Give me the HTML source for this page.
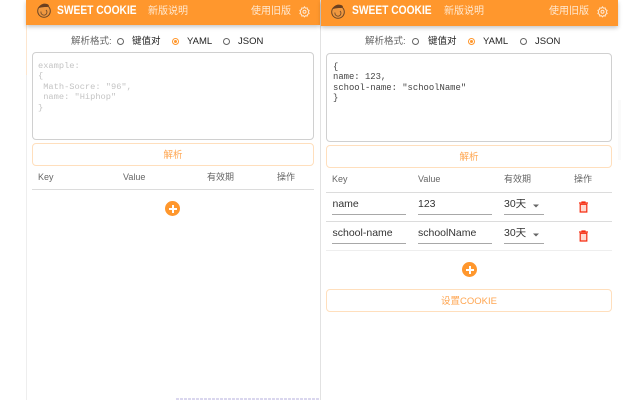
<!DOCTYPE html>
<html>
<head>
<meta charset="utf-8">
<style>
html,body{margin:0;padding:0;width:640px;height:400px;overflow:hidden;background:#fff}
body{font-family:"Liberation Sans","Noto Sans CJK SC",sans-serif;position:relative;color:#333}
#p{position:absolute;left:0;top:0;width:640px;height:400px;filter:blur(.3px)}
.a{position:absolute;white-space:nowrap}
.hd{position:absolute;background:#ff972d;box-shadow:0 2px 4px rgba(0,0,0,.22)}
.t{font-weight:bold;font-size:11.5px;color:#fff;line-height:14px;transform:scaleX(.89);transform-origin:0 0}
.w{font-size:10px;color:#ffe9d2;line-height:14px}
.lab{font-size:9.5px;color:#666;line-height:14px}
.opt{font-size:9.5px;color:#222;line-height:14px}
.r{position:absolute;width:5px;height:5px;border:1px solid #666;border-radius:50%}
.r.on{border-color:#ff972d}
.r.on:after{content:"";position:absolute;left:1px;top:1px;width:3px;height:3px;border-radius:50%;background:#ff972d}
.ta{position:absolute;box-sizing:border-box;border:1px solid #d0d0d0;border-radius:4px;background:#fff;font-family:"Liberation Mono",monospace;font-size:8.7px;line-height:10.4px;white-space:pre;padding:8px 5px}
.btn{position:absolute;box-sizing:border-box;border:1px solid #ffdfbd;border-radius:4px;background:#fff;color:#ffa651;font-size:9.5px;text-align:center;line-height:23px}
.th{font-size:9px;color:#666;line-height:12px}
.hr{position:absolute;height:1px;background:#dcdcdc}
.v{font-size:10.5px;color:#333;line-height:14px}
.ul{position:absolute;height:1px;background:#a8a8a8}
.add{position:absolute;width:15px;height:15px;border-radius:50%;background:#ff972d}
.add:before{content:"";position:absolute;left:3.5px;top:6.5px;width:8px;height:2px;background:#fff}
.add:after{content:"";position:absolute;left:6.5px;top:3.5px;width:2px;height:8px;background:#fff}
svg{position:absolute;overflow:visible}
</style>
</head>
<body>
<div id="p">
<!-- panel edges -->
<div class="a" style="left:26px;top:25px;width:1px;height:375px;background:#eee"></div>
<div class="a" style="left:26px;top:25px;width:1px;height:50px;background:#fde6cf"></div>
<div class="a" style="left:320px;top:0;width:1px;height:400px;background:#e2e2e2"></div>
<div class="a" style="left:618px;top:100px;width:3px;height:60px;background:#fafafa"></div>

<!-- LEFT -->
<div class="hd" style="left:26px;top:0;width:294px;height:25px"></div>
<svg style="left:36px;top:3px" width="16" height="15" viewBox="0 0 16 15"><circle cx="8" cy="8" r="6.300" fill="#f0983f" stroke="#6b4525" stroke-width="1"/><path d="M3 5C4 1 8 0 11 1s2 3 0 3-4 0-8 1z" fill="#6b4020"/><path d="M5 8.500a3 3 0 1 0 5-1.500" fill="none" stroke="#7a4f2a" stroke-width=".9"/></svg>
<div class="a t" style="left:57px;top:3.500px">SWEET COOKIE</div>
<div class="a w" style="left:148px;top:5px">新版说明</div>
<div class="a w" style="left:251px;top:5px">使用旧版</div>
<svg style="left:299px;top:5.500px" width="11" height="11" viewBox="0 0 11 11"><path d="M5.500 .8l1 1.400 1.700-.3.3 1.700 1.600.8-.8 1.600.8 1.600-1.600.7-.3 1.700-1.700-.3-1 1.200-1-1.200-1.700.3-.3-1.700L.9 7.600l.8-1.600-.8-1.600 1.600-.8.3-1.700 1.700.3z" fill="none" stroke="#ffe9d2" stroke-width="1"/><circle cx="5.500" cy="5.800" r="1.500" fill="none" stroke="#ffe9d2" stroke-width="1"/></svg>

<div class="a lab" style="left:71px;top:34.500px">解析格式:</div>
<div class="r" style="left:117px;top:37.500px"></div>
<div class="a opt" style="left:132px;top:34.500px">键值对</div>
<div class="r on" style="left:172px;top:37.500px"></div>
<div class="a opt" style="left:187px;top:34.500px">YAML</div>
<div class="r" style="left:223px;top:37.500px"></div>
<div class="a opt" style="left:238px;top:34.500px">JSON</div>

<div class="ta" style="left:32px;top:52px;width:282px;height:88px;color:#c4c4c4">example:
{
 Math-Socre: "96",
 name: "Hiphop"
}</div>
<div class="btn" style="left:32px;top:143px;width:282px;height:23px">解析</div>
<div class="a th" style="left:38px;top:171px">Key</div>
<div class="a th" style="left:123px;top:171px">Value</div>
<div class="a th" style="left:207px;top:171px">有效期</div>
<div class="a th" style="left:277px;top:171px">操作</div>
<div class="hr" style="left:32px;top:189px;width:282px"></div>
<div class="add" style="left:165px;top:201px"></div>

<!-- footer smudge -->
<div class="a" style="left:176px;top:398px;width:144px;height:2px;background:repeating-linear-gradient(90deg,#c9c5e6 0 3px,#fff 3px 4px);opacity:.7"></div>

<!-- RIGHT -->
<div class="hd" style="left:321px;top:0;width:297px;height:25.500px"></div>
<svg style="left:330px;top:3.500px" width="16" height="15" viewBox="0 0 16 15"><circle cx="8" cy="8" r="6.300" fill="#f0983f" stroke="#6b4525" stroke-width="1"/><path d="M3 5C4 1 8 0 11 1s2 3 0 3-4 0-8 1z" fill="#6b4020"/><path d="M5 8.500a3 3 0 1 0 5-1.500" fill="none" stroke="#7a4f2a" stroke-width=".9"/></svg>
<div class="a t" style="left:352px;top:3.500px">SWEET COOKIE</div>
<div class="a w" style="left:444px;top:5px">新版说明</div>
<div class="a w" style="left:549px;top:5px">使用旧版</div>
<svg style="left:597px;top:5.500px" width="11" height="11" viewBox="0 0 11 11"><path d="M5.500 .8l1 1.400 1.700-.3.3 1.700 1.600.8-.8 1.600.8 1.600-1.600.7-.3 1.700-1.700-.3-1 1.200-1-1.200-1.700.3-.3-1.700L.9 7.600l.8-1.600-.8-1.600 1.600-.8.3-1.700 1.700.3z" fill="none" stroke="#ffe9d2" stroke-width="1"/><circle cx="5.500" cy="5.800" r="1.500" fill="none" stroke="#ffe9d2" stroke-width="1"/></svg>

<div class="a lab" style="left:365px;top:35px">解析格式:</div>
<div class="r" style="left:412px;top:38px"></div>
<div class="a opt" style="left:428px;top:35px">键值对</div>
<div class="r on" style="left:468px;top:38px"></div>
<div class="a opt" style="left:483px;top:35px">YAML</div>
<div class="r" style="left:520px;top:38px"></div>
<div class="a opt" style="left:535px;top:35px">JSON</div>

<div class="ta" style="left:326px;top:53px;width:286px;height:89px;color:#444;font-size:8.9px;padding-left:6px">{
name: 123,
school-name: "schoolName"
}</div>
<div class="btn" style="left:326px;top:145px;width:286px;height:23px">解析</div>
<div class="a th" style="left:332px;top:173px">Key</div>
<div class="a th" style="left:418px;top:173px">Value</div>
<div class="a th" style="left:504px;top:173px">有效期</div>
<div class="a th" style="left:574px;top:173px">操作</div>
<div class="hr" style="left:326px;top:192px;width:286px"></div>

<div class="a v" style="left:332.500px;top:197px">name</div>
<div class="a v" style="left:418px;top:197px">123</div>
<div class="a v" style="left:504px;top:197px">30天</div>
<div class="ul" style="left:332px;top:214px;width:74px"></div>
<div class="ul" style="left:418px;top:214px;width:74px"></div>
<div class="ul" style="left:504px;top:214px;width:40px"></div>
<svg style="left:533px;top:204px" width="7" height="4"><path d="M0 0.500h6L3 3.500z" fill="#666"/></svg>
<svg style="left:578px;top:200.500px" width="11" height="12" viewBox="0 0 11 12"><path d="M1 2h9M4 2V1h3v1" fill="none" stroke="#f52c10" stroke-width="1.200"/><path d="M2.200 3.300h6.600V11H2.200z" fill="#ffd9d0" stroke="#f52c10" stroke-width="1.200"/></svg>
<div class="hr" style="left:326px;top:221px;width:286px"></div>

<div class="a v" style="left:332.500px;top:226px">school-name</div>
<div class="a v" style="left:418px;top:226px">schoolName</div>
<div class="a v" style="left:504px;top:226px">30天</div>
<div class="ul" style="left:332px;top:243px;width:74px"></div>
<div class="ul" style="left:418px;top:243px;width:74px"></div>
<div class="ul" style="left:504px;top:243px;width:40px"></div>
<svg style="left:533px;top:233px" width="7" height="4"><path d="M0 0.500h6L3 3.500z" fill="#666"/></svg>
<svg style="left:578px;top:229.500px" width="11" height="12" viewBox="0 0 11 12"><path d="M1 2h9M4 2V1h3v1" fill="none" stroke="#f52c10" stroke-width="1.200"/><path d="M2.200 3.300h6.600V11H2.200z" fill="#ffd9d0" stroke="#f52c10" stroke-width="1.200"/></svg>
<div class="hr" style="left:326px;top:250px;width:286px;background:#eee"></div>

<div class="add" style="left:462px;top:262px"></div>
<div class="btn" style="left:326px;top:289px;width:286px;height:23px">设置COOKIE</div>
</div>
</body>
</html>
